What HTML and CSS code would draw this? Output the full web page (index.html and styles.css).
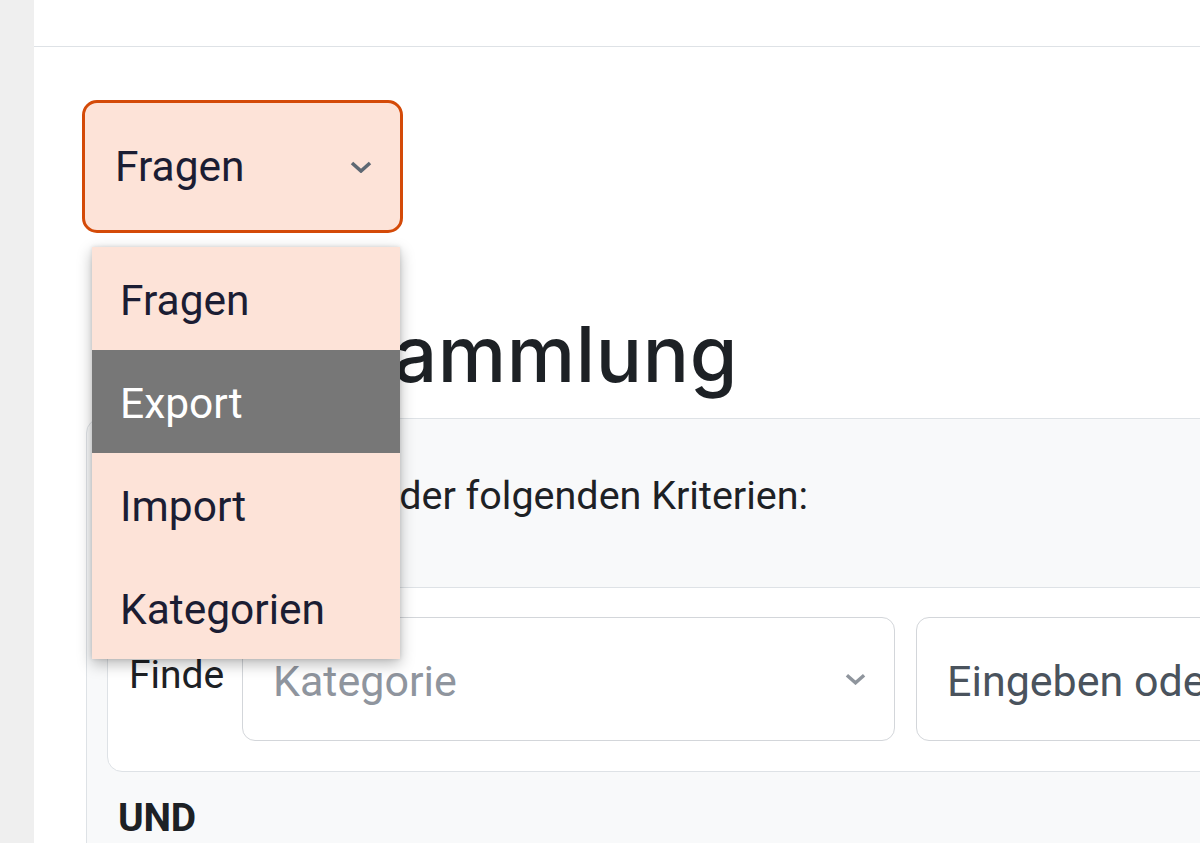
FILE: index.html
```html
<!DOCTYPE html>
<html lang="de">
<head>
<meta charset="utf-8">
<title>Fragensammlung</title>
<link rel="stylesheet" href="styles.css">
</head>
<body>
<div class="page">
  <aside class="rail"></aside>
  <div class="main">
    <header class="topbar"></header>
    <div class="content">
      <div class="nav-select">
        <div class="select-box">
          <span class="select-value">Fragen</span>
          <svg class="chev chev-dark" viewBox="0 0 22 12" width="22" height="12" aria-hidden="true"><polyline points="2,2 11,10 20,2" /></svg>
        </div>
        <ul class="menu">
          <li class="menu-item">Fragen</li>
          <li class="menu-item active">Export</li>
          <li class="menu-item">Import</li>
          <li class="menu-item">Kategorien</li>
        </ul>
      </div>
      <h2 class="title">Fragensammlung</h2>
      <section class="filter">
        <p class="match"><span class="match-lead">Entspricht allen</span> der folgenden Kriterien:</p>
        <div class="criteria">
          <span class="crit-label">Finde</span>
          <div class="field field-select">
            <span class="placeholder">Kategorie</span>
            <svg class="chev chev-light" viewBox="0 0 22 12" width="21" height="12" aria-hidden="true"><polyline points="2,2 11,10 20,2" /></svg>
          </div>
          <div class="field field-input">Eingeben oder auswählen</div>
        </div>
        <div class="joiner">UND</div>
      </section>
    </div>
  </div>
</div>
</body>
</html>
```
FILE: styles.css
```css
* { box-sizing: border-box; }

html, body {
  margin: 0;
  padding: 0;
  height: 100%;
}

body {
  font-family: Roboto, "Liberation Sans", Arial, sans-serif;
  color: #1d2125;
  background: #ffffff;
  overflow: hidden;
}

.page {
  display: flex;
  height: 843px;
}

.rail {
  width: 34px;
  flex: 0 0 34px;
  background: #efefef;
}

.main {
  flex: 1;
  min-width: 0;
  overflow: hidden;
}

.topbar {
  height: 47px;
  border-bottom: 1px solid #dee2e6;
  background: #ffffff;
}

.content {
  padding: 53px 0 0 48px;
}

/* Navigation select */
.nav-select {
  position: relative;
  width: 321px;
  z-index: 5;
}

.select-box {
  display: flex;
  align-items: center;
  justify-content: space-between;
  height: 133px;
  padding: 0 28px 0 30px;
  background: #fde3d8;
  border: 3px solid #d44a08;
  border-radius: 15px;
}

.select-value {
  font-size: 42.5px;
  line-height: 1;
  color: #1b1d33;
  margin-top: 2px;
}

.chev {
  display: block;
  fill: none;
  stroke-width: 3.6;
  stroke-linecap: butt;
  stroke-linejoin: miter;
}

.chev-dark { stroke: #5e6873; }
.chev-light { stroke: #8f959d; }

.menu {
  position: absolute;
  top: 147px;
  left: 10px;
  width: 308px;
  margin: 0;
  padding: 0;
  list-style: none;
  background: #fde3d8;
  box-shadow: 0 5px 14px rgba(0, 0, 0, 0.28), 0 0 4px rgba(0, 0, 0, 0.12);
}

.menu-item {
  height: 103px;
  display: flex;
  align-items: center;
  padding-left: 28px;
  padding-top: 3px;
  font-size: 42.5px;
  color: #1b1d33;
}

.menu-item.active {
  background: #777777;
  color: #ffffff;
}

/* Heading */
.title {
  margin: 76px 0 0 10px;
  font-family: Inter, "Noto Sans", sans-serif;
  font-weight: 500;
  font-size: 77px;
  line-height: 91px;
  letter-spacing: 0.6px;
  color: #1d2125;
  white-space: nowrap;
}

/* Filter panel */
.filter {
  margin: 18px 0 0 4px;
  width: 1300px;
  background: #f8f9fa;
  border: 1px solid #dee2e6;
  border-radius: 15px 0 0 0;
  padding: 47px 0 60px 20px;
}

.match {
  margin: 0 0 0 11px;
  font-size: 39.5px;
  line-height: 60px;
  color: #1d2125;
  white-space: nowrap;
}

.criteria {
  margin-top: 61px;
  display: flex;
  align-items: flex-start;
  background: #ffffff;
  border: 1px solid #dee2e6;
  border-radius: 15px 0 0 15px;
  padding: 29px 0 30px 21px;
}

.crit-label {
  font-size: 39px;
  line-height: 60px;
  padding-top: 28px;
  width: 113px;
  flex: 0 0 113px;
  color: #1d2125;
}

.field {
  height: 124px;
  border: 1px solid #d3d6da;
  border-radius: 13px;
  background: #ffffff;
  display: flex;
  align-items: center;
  font-size: 43px;
  white-space: nowrap;
}

.field-select {
  width: 653px;
  flex: 0 0 653px;
  justify-content: space-between;
  padding: 0 28px 0 30px;
}

.placeholder {
  color: #8f959e;
  margin-top: 4px;
}

.field-input {
  margin-left: 21px;
  width: 600px;
  flex: 0 0 600px;
  padding-left: 30px;
  padding-top: 4px;
  color: #4a535d;
}

.joiner {
  margin: 16px 0 0 11px;
  font-size: 39px;
  font-weight: 700;
  line-height: 60px;
  letter-spacing: -0.3px;
  color: #1d2125;
}
```
